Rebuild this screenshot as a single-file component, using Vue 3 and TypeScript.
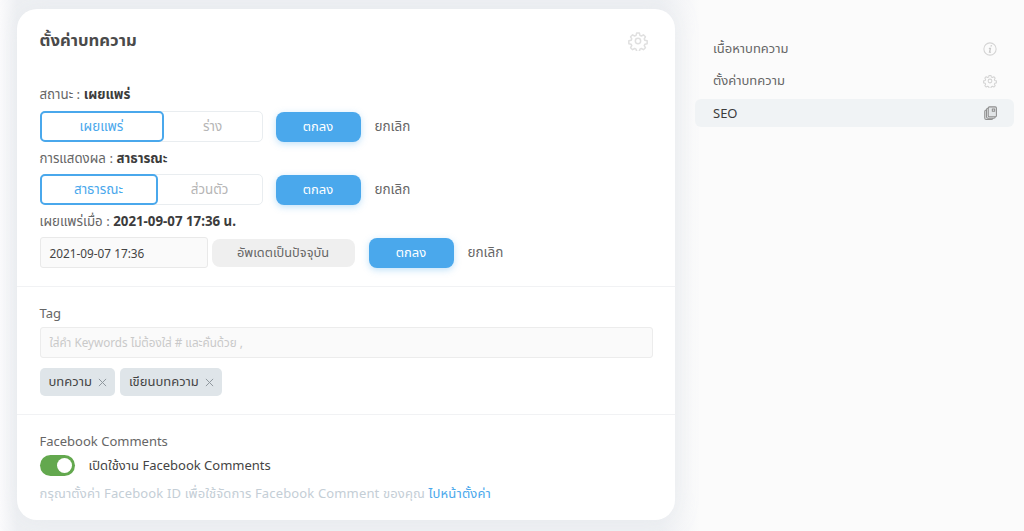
<template>
  <div class="page">
    <main class="card">
      <section class="sec sec-top">
        <header class="card-head">
          <h2>ตั้งค่าบทความ</h2>
          <svg class="gear-lg" viewBox="0 0 24 24"><path :d="gearPath" /><circle cx="12" cy="12" r="3.2" /></svg>
        </header>

        <p class="label first">สถานะ : <b>เผยแพร่</b></p>
        <div class="row">
          <div class="seg">
            <span class="seg-item on w1">เผยแพร่</span>
            <span class="seg-item">ร่าง</span>
          </div>
          <button class="ok">ตกลง</button>
          <a class="cancel">ยกเลิก</a>
        </div>

        <p class="label">การแสดงผล : <b>สาธารณะ</b></p>
        <div class="row">
          <div class="seg">
            <span class="seg-item on w2">สาธารณะ</span>
            <span class="seg-item">ส่วนตัว</span>
          </div>
          <button class="ok">ตกลง</button>
          <a class="cancel">ยกเลิก</a>
        </div>

        <p class="label">เผยแพร่เมื่อ : <b>2021-09-07 17:36 น.</b></p>
        <div class="row date-row">
          <div class="date-input">2021-09-07 17:36</div>
          <button class="now">อัพเดตเป็นปัจจุบัน</button>
          <button class="ok">ตกลง</button>
          <a class="cancel">ยกเลิก</a>
        </div>
      </section>

      <section class="sec sec-tag">
        <p class="sec-title">Tag</p>
        <div class="tag-input">ใส่คำ Keywords ไม่ต้องใส่ # และคั่นด้วย ,</div>
        <div class="tags">
          <span v-for="t in tags" :key="t" class="tag">
            {{ t }}
            <svg class="x" viewBox="0 0 10 10"><path d="M1 1l8 8M9 1l-8 8" /></svg>
          </span>
        </div>
      </section>

      <section class="sec sec-fb">
        <p class="sec-title">Facebook Comments</p>
        <div class="switch-row">
          <span class="switch"><span class="knob"></span></span>
          <span>เปิดใช้งาน Facebook Comments</span>
        </div>
        <p class="hint">กรุณาตั้งค่า Facebook ID เพื่อใช้จัดการ Facebook Comment ของคุณ <a>ไปหน้าตั้งค่า</a></p>
      </section>
    </main>

    <nav class="side">
      <div class="side-item">
        <span>เนื้อหาบทความ</span>
        <svg class="ico" viewBox="0 0 24 24"><circle cx="12" cy="12" r="10.500" /><path class="solid" d="M13.200 5.500h2.400l-.5 2.400h-2.400zM10.300 10h3.800l-1.500 6.600h1.400l-.4 1.900H9.800l1.500-6.600H9.900z" /></svg>
      </div>
      <div class="side-item">
        <span>ตั้งค่าบทความ</span>
        <svg class="ico" viewBox="0 0 24 24"><path :d="gearPath" /><circle cx="12" cy="12" r="3.2" /></svg>
      </div>
      <div class="side-item active">
        <span>SEO</span>
        <svg class="ico dark" viewBox="0 0 24 24"><rect x="3" y="7" width="14" height="16" rx="2.500" /><rect x="6" y="4" width="15" height="17" rx="2.500" /><rect x="9" y="1.500" width="14" height="17" rx="2" /><path d="M16 5h4v4h-4z" /></svg>
      </div>
    </nav>
  </div>
</template>

<script setup lang="ts">
const tags: string[] = ['บทความ', 'เขียนบทความ']

const gearPath =
  'M10.3 2.500h3.400l.6 2.700 1.800.8 2.400-1.400 2.400 2.400-1.400 2.400.8 1.800 2.700.6v3.400l-2.700.6-.8 1.800 1.400 2.400-2.400 2.400-2.400-1.400-1.800.8-.6 2.700h-3.400l-.6-2.700-1.800-.8-2.400 1.400-2.400-2.400 1.400-2.400-.8-1.800-2.700-.6v-3.400l2.700-.6.8-1.800-1.400-2.400 2.400-2.400 2.400 1.400 1.800-.8z'
</script>

<style>
html, body { margin: 0; background: #fbfbfb; }
</style>

<style scoped>
* { box-sizing: border-box; }

.page {
  width: 1024px; height: 531px; overflow: hidden;
  display: flex; align-items: flex-start; gap: 20px;
  padding: 9px 10px 0 17px;
  font-family: 'Noto Sans', 'Noto Sans Thai', 'Open Sans', sans-serif;
  font-size: 13px; color: #555;
  background: linear-gradient(90deg, #fbfbfc 0, #eef0f3 17px, #eef0f3 660px, #fbfbfb 700px);
}

.card {
  width: 658px; height: 511px; flex-shrink: 0;
  background: #fff; border-radius: 20px;
  box-shadow: 0 0 20px rgba(225, 229, 234, .55);
  display: flex; flex-direction: column;
}
.sec { padding: 0 22px 0 22.500px; border-bottom: 1px solid #f1f2f4; }
.sec:last-child { border-bottom: 0; }
.sec-top { height: 278px; padding-top: 20px; }
.sec-tag { height: 128px; padding-top: 17px; }
.sec-fb { padding-top: 17px; }

.card-head { display: flex; align-items: center; justify-content: space-between; height: 24px; padding-right: 5px; }
.card-head h2 { margin: 0; font-size: 16.700px; font-weight: 700; color: #4a4a4a; }
.gear-lg { width: 20px; height: 20px; fill: none; stroke: #e0e0e0; stroke-width: 1.800; stroke-linejoin: round; }

.label { margin: 6px 0; height: 20px; line-height: 20px; font-size: 13.300px; color: #666; }
.label.first { margin-top: 31px; margin-bottom: 7px; }
.label b { color: #3c3c3c; font-weight: 700; }

.row { display: flex; align-items: center; height: 31px; }
.seg { width: 223px; height: 31px; display: flex; border: 1px solid #e9edf0; border-radius: 5px; }
.seg-item { flex: 1; display: flex; align-items: center; justify-content: center; color: #b5b5b5; font-size: 13.400px; }
.seg-item.on {
  flex: none; margin: -1px 0 -1px -1px; height: 31px;
  border: 2px solid #4aa8ec; border-radius: 5px; color: #4aa8ec; background: #fff;
}
.w1 { width: 124px; }
.w2 { width: 118px; }

.ok {
  width: 85px; height: 30px; margin-left: 13px; border: 0; border-radius: 8px;
  background: #4aa8ec; color: #fff; font: inherit; font-size: 13px;
  box-shadow: 0 2px 7px rgba(74, 168, 236, .35);
}
.date-row .ok { margin-left: 14px; }
.cancel { margin-left: 14px; color: #666; font-size: 13.500px; }

.date-input {
  width: 168px; height: 31px; padding-left: 9px; display: flex; align-items: center;
  border: 1px solid #e9e9e9; border-radius: 3px; background: #fafafa; color: #444; font-size: 11.800px;
}
.now {
  width: 143px; height: 28px; margin-left: 4px; border: 0; border-radius: 8px;
  background: #efefef; color: #666; font: inherit; font-size: 12.800px;
}
.sec-title { margin: 0; height: 18px; line-height: 18px; font-size: 13px; color: #666; }

.tag-input {
  height: 31px; margin-top: 5px; padding-left: 9px; display: flex; align-items: center;
  border: 1px solid #ececec; border-radius: 3px; background: #fafafa; color: #c9c9c9; font-size: 11.700px;
}
.tags { display: flex; gap: 5px; margin-top: 10px; }
.tag {
  height: 28px; padding: 0 8px 0 9px; display: flex; align-items: center; gap: 6px;
  background: #dfe5e9; border-radius: 5px; color: #444; font-size: 13px;
}
.x { width: 9px; height: 9px; fill: none; stroke: #8f979d; stroke-width: 1.100; }

.switch-row { display: flex; align-items: center; gap: 14px; margin-top: 5px; height: 21px; color: #444; font-size: 13px; }
.switch { width: 35px; height: 21px; border-radius: 11px; background: #63a84e; position: relative; }
.knob { position: absolute; right: 3px; top: 3px; width: 15px; height: 15px; border-radius: 50%; background: #fff; }
.hint { margin: 8px 0 0; height: 18px; line-height: 18px; font-size: 13px; letter-spacing: .15px; color: #c4ced6; }
.hint a { color: #4aa8ec; }

.side { width: 319px; padding-top: 26px; display: flex; flex-direction: column; gap: 4px; }
.side-item {
  height: 28px; padding: 0 17px 0 18px; display: flex; align-items: center; justify-content: space-between;
  border-radius: 6px; color: #666; font-size: 13px;
}
.side-item.active { background: #f0f3f5; color: #3c3c3c; }
.ico { width: 14px; height: 14px; fill: none; stroke: #d4d4d4; stroke-width: 1.800; stroke-linejoin: round; }
.ico .solid { fill: #c9c9c9; stroke: none; }
.ico.dark { stroke: #8f8f8f; stroke-width: 1.800; fill: #e2e5e7; }
</style>
